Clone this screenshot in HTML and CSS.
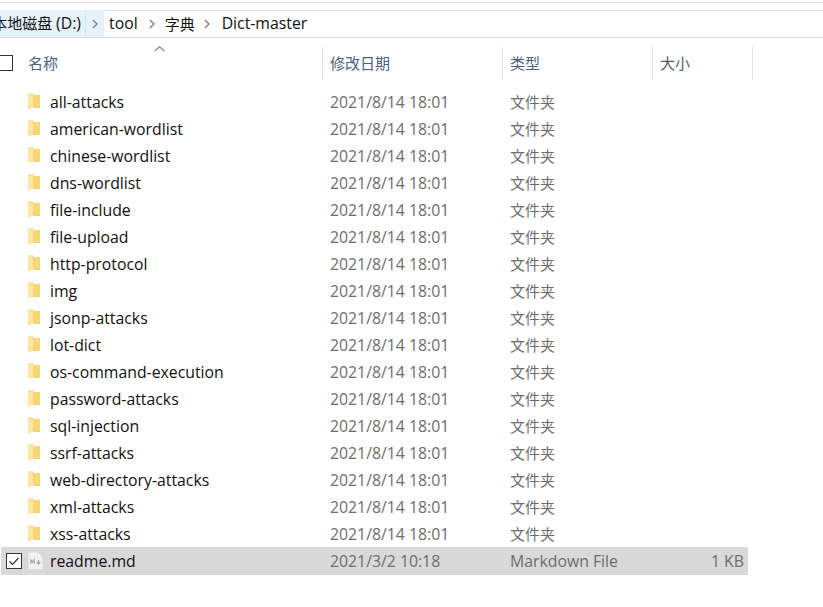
FILE: index.html
```html
<!DOCTYPE html>
<html lang="zh">
<head>
<meta charset="utf-8">
<title>Dict-master</title>
<link rel="stylesheet" href="styles.css">
</head>
<body>
<svg class="defs" width="0" height="0" aria-hidden="true">
  <symbol id="folder" viewBox="0 0 12 17">
    <path d="M0 .5h5l1 1.500h6v12.500H0z" fill="#f5d373"/>
    <path d="M6 2.500h5.500v11.500H6z" fill="#f9d976"/>
    <path d="M0 .5l6 2v11.500L0 16.800z" fill="#fde7a0"/>
    <path d="M6 2.500v11.500" stroke="#eec45c" stroke-width=".8" fill="none"/>
    <path d="M6 14h6v.6H6z" fill="#e6bd56"/>
  </symbol>
  <symbol id="md" viewBox="0 0 15 18">
    <path d="M.5.500h9l5 5v12H.5z" fill="#f2f2f2" stroke="#e4e4e4"/>
    <path d="M9.500.500v5h5z" fill="#fff" stroke="#e4e4e4"/>
    <path d="M2.800 12V8l1.700 2 1.700-2v4" fill="none" stroke="#a8a8a8" stroke-width="1.200"/>
    <path d="M10.500 8v3.500M8.800 10l1.700 2 1.700-2" fill="none" stroke="#a8a8a8" stroke-width="1.200"/>
  </symbol>
</svg>

<div class="window">
  <nav class="address">
    <div class="crumb-root">
      <span class="crumb-label">本地磁盘 <span class="latin">(D:)</span></span>
    </div>
    <div class="crumb-sep crumb-sep-active"><svg class="chev" viewBox="0 0 6 10"><path d="M1 1l4 4-4 4"/></svg></div>
    <span class="crumb latin">tool</span>
    <div class="crumb-sep"><svg class="chev" viewBox="0 0 6 10"><path d="M1 1l4 4-4 4"/></svg></div>
    <span class="crumb crumb-cjk">字典</span>
    <div class="crumb-sep"><svg class="chev" viewBox="0 0 6 10"><path d="M1 1l4 4-4 4"/></svg></div>
    <span class="crumb latin">Dict-master</span>
  </nav>

  <div class="header">
    <div class="head-name">
      <span class="check check-head"></span>
      <span>名称</span>
      <svg class="sort" viewBox="0 0 10 5"><path d="M.5 4.500L5 .5l4.500 4"/></svg>
    </div>
    <div class="head-cell">修改日期</div>
    <div class="head-cell">类型</div>
    <div class="head-cell">大小</div>
  </div>

  <div class="list">
    <div class="row"><div class="name"><svg class="ico"><use href="#folder"/></svg>all-attacks</div><div class="meta">2021/8/14 18:01</div><div class="meta cjk">文件夹</div><div></div></div>
    <div class="row"><div class="name"><svg class="ico"><use href="#folder"/></svg>american-wordlist</div><div class="meta">2021/8/14 18:01</div><div class="meta cjk">文件夹</div><div></div></div>
    <div class="row"><div class="name"><svg class="ico"><use href="#folder"/></svg>chinese-wordlist</div><div class="meta">2021/8/14 18:01</div><div class="meta cjk">文件夹</div><div></div></div>
    <div class="row"><div class="name"><svg class="ico"><use href="#folder"/></svg>dns-wordlist</div><div class="meta">2021/8/14 18:01</div><div class="meta cjk">文件夹</div><div></div></div>
    <div class="row"><div class="name"><svg class="ico"><use href="#folder"/></svg>file-include</div><div class="meta">2021/8/14 18:01</div><div class="meta cjk">文件夹</div><div></div></div>
    <div class="row"><div class="name"><svg class="ico"><use href="#folder"/></svg>file-upload</div><div class="meta">2021/8/14 18:01</div><div class="meta cjk">文件夹</div><div></div></div>
    <div class="row"><div class="name"><svg class="ico"><use href="#folder"/></svg>http-protocol</div><div class="meta">2021/8/14 18:01</div><div class="meta cjk">文件夹</div><div></div></div>
    <div class="row"><div class="name"><svg class="ico"><use href="#folder"/></svg>img</div><div class="meta">2021/8/14 18:01</div><div class="meta cjk">文件夹</div><div></div></div>
    <div class="row"><div class="name"><svg class="ico"><use href="#folder"/></svg>jsonp-attacks</div><div class="meta">2021/8/14 18:01</div><div class="meta cjk">文件夹</div><div></div></div>
    <div class="row"><div class="name"><svg class="ico"><use href="#folder"/></svg>lot-dict</div><div class="meta">2021/8/14 18:01</div><div class="meta cjk">文件夹</div><div></div></div>
    <div class="row"><div class="name"><svg class="ico"><use href="#folder"/></svg>os-command-execution</div><div class="meta">2021/8/14 18:01</div><div class="meta cjk">文件夹</div><div></div></div>
    <div class="row"><div class="name"><svg class="ico"><use href="#folder"/></svg>password-attacks</div><div class="meta">2021/8/14 18:01</div><div class="meta cjk">文件夹</div><div></div></div>
    <div class="row"><div class="name"><svg class="ico"><use href="#folder"/></svg>sql-injection</div><div class="meta">2021/8/14 18:01</div><div class="meta cjk">文件夹</div><div></div></div>
    <div class="row"><div class="name"><svg class="ico"><use href="#folder"/></svg>ssrf-attacks</div><div class="meta">2021/8/14 18:01</div><div class="meta cjk">文件夹</div><div></div></div>
    <div class="row"><div class="name"><svg class="ico"><use href="#folder"/></svg>web-directory-attacks</div><div class="meta">2021/8/14 18:01</div><div class="meta cjk">文件夹</div><div></div></div>
    <div class="row"><div class="name"><svg class="ico"><use href="#folder"/></svg>xml-attacks</div><div class="meta">2021/8/14 18:01</div><div class="meta cjk">文件夹</div><div></div></div>
    <div class="row"><div class="name"><svg class="ico"><use href="#folder"/></svg>xss-attacks</div><div class="meta">2021/8/14 18:01</div><div class="meta cjk">文件夹</div><div></div></div>
    <div class="row row-selected"><div class="name"><span class="check check-on"><svg viewBox="0 0 14 14"><path d="M2.500 7.500l3 3 6-6.500"/></svg></span><svg class="ico ico-md"><use href="#md"/></svg>readme.md</div><div class="meta">2021/3/2 10:18</div><div class="meta">Markdown File</div><div class="meta size">1 KB</div></div>
  </div>
</div>
</body>
</html>
```
FILE: styles.css
```css
* { box-sizing: border-box; }
html, body { margin: 0; height: 100%; background: #fff; overflow: hidden; }
body {
  font-family: "Open Sans", "Noto Sans CJK SC", sans-serif;
  font-size: 15.8px;
  color: #111;
}
.defs { display: block; height: 0; }

.window { padding-top: 2px; }

.address {
  display: flex;
  align-items: stretch;
  height: 36px;
  border-top: 1px solid #e0e2e6;
  padding: 7px 0 0;
  background: linear-gradient(#fff 7px, #e0e2e6 7px, #e0e2e6 8px, #fff 8px);
  border-bottom: 1px solid #dcdcdc;
  font-size: 15px;
}
.latin { font-size: 15.8px; }
.crumb-root {
  width: 85px;
  background: #e6f2fc;
  overflow: hidden;
  display: flex;
  align-items: center;
  justify-content: flex-end;
  padding: 0 4px 1px 0;
  white-space: nowrap;
  flex: none;
}
.crumb-label { flex: none; }
.crumb-sep {
  width: 19px;
  display: flex;
  align-items: center;
  justify-content: center;
  flex: none;
}
.crumb-sep-active { background: #e6f2fc; border-left: 1px solid #cfe6f8; }
.chev { width: 6px; height: 10px; fill: none; stroke: #7a7a7a; stroke-width: 1.300; }
.crumb { display: flex; align-items: center; padding: 0 5px 1px; }
.crumb-cjk { padding: 0 3px 1px; }

.header {
  display: grid;
  grid-template-columns: 322px 180px 150px 101px;
  height: 33px;
  margin-top: 9px;
  color: #4c607a;
  font-size: 15px;
  align-items: stretch;
}
.head-cell {
  border-left: 1px solid #e3e3e3;
  padding: 0 0 2px 7px;
  display: flex;
  align-items: center;
}
.head-cell:last-child { border-right: 1px solid #e3e3e3; }
.head-name {
  position: relative;
  display: flex;
  align-items: center;
  padding: 0 0 2px 28px;
}
.check {
  position: absolute;
  left: 5px;
  top: 50%;
  width: 16px;
  height: 16px;
  margin-top: -8px;
  border: 1px solid #333;
  background: #fff;
}
.check-head { left: -3px; margin-top: -9px; }
.check svg { display: block; width: 14px; height: 14px; fill: none; stroke: #333; stroke-width: 1.200; }
.sort {
  position: absolute;
  left: 154px;
  top: -1px;
  width: 11px;
  height: 6px;
  fill: none;
  stroke: #7a7a7a;
  stroke-width: 1;
}

.list { margin-top: 8px; width: 748px; }
.row {
  display: grid;
  grid-template-columns: 322px 180px 150px 96px;
  height: 27px;
  align-items: center;
}
.row-selected {
  background: #d9d9d9;
  height: 28px;
  margin-left: 1px;
  grid-template-columns: 321px 180px 150px 96px;
}
.name {
  position: relative;
  display: flex;
  align-items: center;
  padding-left: 28px;
  white-space: nowrap;
}
.ico { width: 12px; height: 17px; margin-right: 10px; flex: none; }
.ico-md { width: 15px; height: 18px; margin-right: 7px; }
.row-selected .name { padding-left: 27px; }
.meta { padding-left: 8px; color: #6d6d6d; white-space: nowrap; }
.cjk { font-size: 15px; }
.size { text-align: right; padding-right: 4px; }
```
